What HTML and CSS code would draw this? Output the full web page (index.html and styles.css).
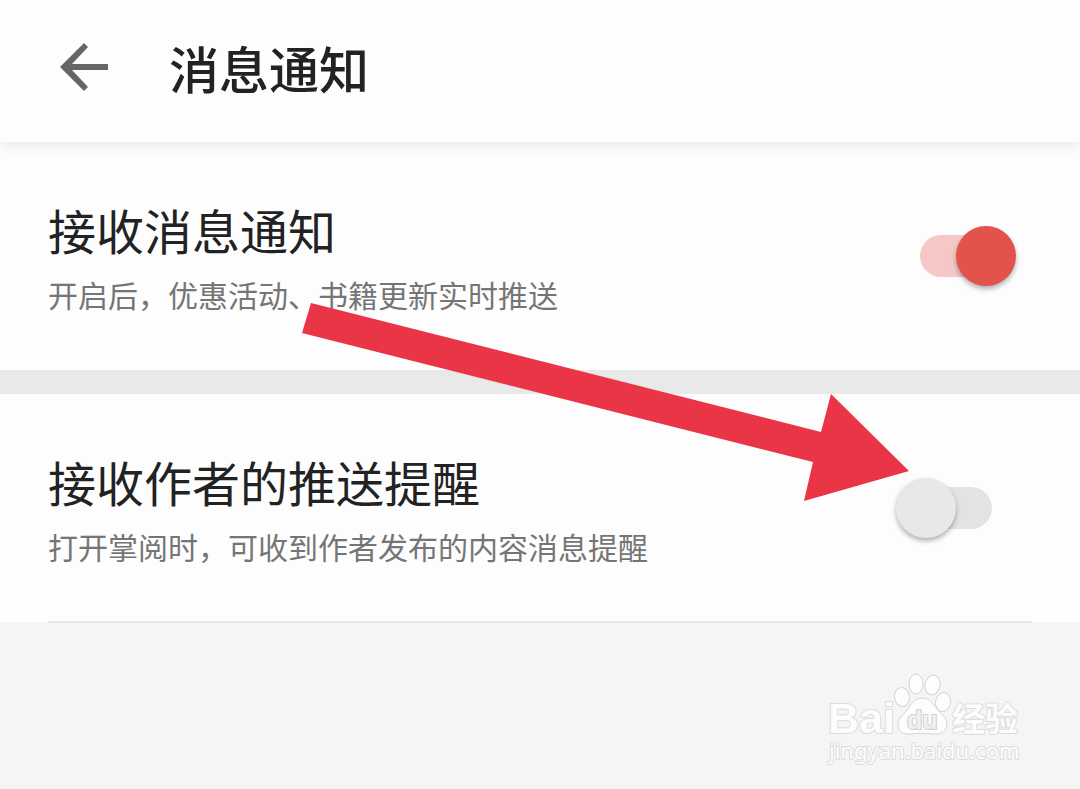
FILE: index.html
```html
<!DOCTYPE html>
<html lang="zh-CN">
<head>
    <meta charset="UTF-8">
    <meta name="viewport" content="width=device-width, initial-scale=1.0">
    <title>消息通知</title>
    <link rel="stylesheet" href="styles.css">
</head>
<body>
    <header class="topbar">
        <a class="back" href="#" aria-label="返回">
            <svg width="48" height="48" viewBox="0 0 48 48">
                <path d="M48 21H12L28 4L24 0L0 24L24 48L28 44L12 27H48Z"/>
            </svg>
        </a>
        <h1>消息通知</h1>
    </header>

    <main>
        <div class="row">
            <label class="text" for="notify">
                <span class="name">接收消息通知</span>
                <span class="desc">开启后，优惠活动、书籍更新实时推送</span>
            </label>
            <input class="switch" type="checkbox" id="notify" checked>
        </div>
        <div class="divider"></div>
        <div class="row">
            <label class="text" for="author">
                <span class="name">接收作者的推送提醒</span>
                <span class="desc">打开掌阅时，可收到作者发布的内容消息提醒</span>
            </label>
            <input class="switch" type="checkbox" id="author">
        </div>
        <hr class="line">
    </main>

    <!-- arrow pointing at the second switch -->
    <svg class="arrow" width="608" height="199" viewBox="302 303 608 199">
        <polygon points="311,303 821,432 831,394 909,471 804,501 813,462 302,333"/>
    </svg>

    <svg class="watermark" width="210" height="100" viewBox="0 0 210 100">
        <text class="logo" x="4" y="61">Bai</text>
        <g class="paw">
            <ellipse cx="78" cy="25" rx="7.5" ry="9.5" transform="rotate(-10 78 25)"/>
            <ellipse cx="92" cy="12" rx="7" ry="10"/>
            <ellipse cx="108.500" cy="13" rx="7.5" ry="10" transform="rotate(12 108.500 13)"/>
            <ellipse cx="119" cy="30" rx="7.5" ry="9.500" transform="rotate(12 119 30)"/>
            <path d="M98 26C90 26 87 33 83 38C79 43 74 46 74 53C74 60 80 63 87 62C95 61 102 61 109 62C117 63 123 59 123 52C123 45 117 42 113 37C109 32 106 26 98 26Z"/>
        </g>
        <text class="du" x="83" y="57">du</text>
        <text class="cn" x="128" y="59">经验</text>
        <text class="site" x="5" y="87">jingyan.baidu.com</text>
    </svg>
</body>
</html>
```

FILE: styles.css
```css
*{
    padding: 0;
    margin: 0;
    box-sizing: border-box;
}
body{
    position: relative;
    min-height: 100vh;
    background-color: #f5f5f5;
    color: #222;
    font-family: "Noto Sans CJK SC", sans-serif;
}
.topbar{
    position: relative;
    display: flex;
    align-items: center;
    gap: 61px;
    height: 142px;
    padding: 0 60px 8px;
    background-color: #fdfdfd;
    box-shadow: 0 2px 14px rgba(0, 0, 0, 0.1);
}
.back{
    display: flex;
}
.back svg{
    fill: #666;
}
h1{
    font-size: 50px;
    line-height: 60px;
    font-weight: 500;
}
.row{
    display: flex;
    align-items: center;
    justify-content: space-between;
    padding: 54px 88px 54px 48px;
    background-color: #fdfdfd;
}
.text{
    display: flex;
    flex-direction: column;
    gap: 18px;
    padding: 6px 0 2px;
}
.name{
    font-size: 48px;
    line-height: 54px;
    font-weight: 400;
}
.desc{
    font-size: 30px;
    line-height: 40px;
    font-weight: 400;
    color: #757575;
}
.divider{
    height: 24px;
    background-color: #e9e9e9;
}
.line{
    height: 2px;
    margin: -1px 48px 0;
    border: none;
    background-color: #e8e8e8;
}

/* switch: the thumb hangs over the end of the track */
.switch{
    appearance: none;
    position: relative;
    flex: none;
    width: 72px;
    height: 42px;
    border-radius: 21px;
    background-color: #e3e3e3;
    cursor: pointer;
}
.switch::before{
    content: "";
    position: absolute;
    top: -9px;
    left: -24px;
    width: 60px;
    height: 60px;
    border-radius: 50%;
    background-color: #e8e8e8;
    box-shadow: 0 3px 5px rgba(0, 0, 0, 0.3);
}
.switch:checked{
    background-color: #f5c8c6;
}
.switch:checked::before{
    left: 36px;
    background-color: #e4534b;
}

.arrow{
    position: absolute;
    top: 303px;
    left: 302px;
    fill: #ea3546;
    pointer-events: none;
}
.watermark{
    position: absolute;
    right: 46px;
    bottom: 17px;
    fill: #fdfdfd;
    stroke: #dcdcdc;
    stroke-width: 2px;
    stroke-linejoin: round;
}
.watermark text{
    paint-order: stroke;
}
.paw{
    stroke-width: 1px;
    stroke: #d4d4d4;
}
.logo{
    font: bold 43px "Liberation Sans", sans-serif;
}
.watermark .du{
    font: bold 25px "Liberation Sans", sans-serif;
    fill: #f0f0f0;
    stroke: #d0d0d0;
}
.cn{
    font: bold 33px "Noto Sans CJK SC", sans-serif;
}
.site{
    font: 22px "Noto Sans", sans-serif;
}
```
